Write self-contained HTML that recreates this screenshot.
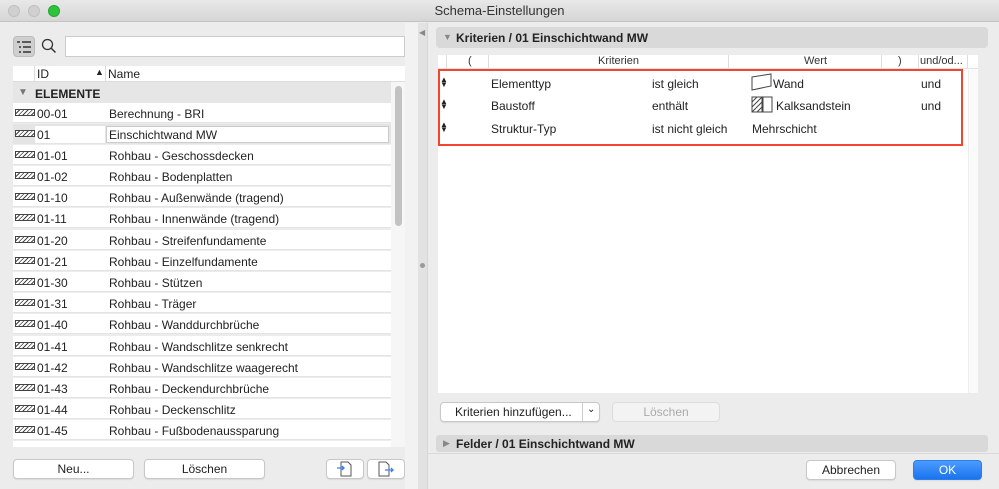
<!DOCTYPE html>
<html><head><meta charset="utf-8"><style>
*{box-sizing:border-box;margin:0;padding:0}
body{width:999px;height:489px;overflow:hidden;background:#ececec;font-family:"Liberation Sans",sans-serif;font-size:12px;color:#222;position:relative}
.abs{position:absolute}
.title{left:0;top:0;width:999px;height:22px;background:linear-gradient(#e8e8e8,#d6d6d6);border-bottom:1px solid #c4c4c4;text-align:center;line-height:22px;font-size:13px;color:#333}
.dot{width:12px;height:12px;border-radius:50%;top:5px;background:#d0d0d0;border:1px solid #c0c0c0}
.row{position:absolute;left:13px;width:378px;height:20px;background:#fff;border-bottom:1px solid #e4e4e4}
.row span{position:absolute;top:4px}
.hat{position:absolute;left:2px;top:6px;width:20px;height:7px;border:1px solid #444;background:repeating-linear-gradient(135deg,#fff 0 2px,#444 2px 3px)}
.btn{position:absolute;background:#fff;border:1px solid #c8c8c8;border-radius:4px;text-align:center;line-height:18px;height:20px;box-shadow:0 1px 1px rgba(0,0,0,.08)}
.crow span{position:absolute}
</style></head><body>
<div class="abs title">Schema-Einstellungen</div>
<div class="abs dot" style="left:8px"></div>
<div class="abs dot" style="left:28px"></div>
<div class="abs dot" style="left:48px;background:#2dc43b;border-color:#23a62f"></div>

<!-- left panel -->
<div class="abs" style="left:13px;top:36px;width:22px;height:21px;background:#cfcfcf;border-radius:4px;border:1px solid #bbb"></div>
<svg class="abs" style="left:16px;top:40px" width="16" height="14"><g stroke="#333" stroke-width="1.5"><line x1="1" y1="2" x2="4" y2="2"/><line x1="6" y1="2" x2="15" y2="2"/><line x1="3" y1="7" x2="5" y2="7"/><line x1="7" y1="7" x2="15" y2="7"/><line x1="3" y1="12" x2="5" y2="12"/><line x1="7" y1="12" x2="15" y2="12"/></g></svg>
<svg class="abs" style="left:41px;top:38px" width="16" height="16"><circle cx="6.5" cy="6.5" r="5" fill="none" stroke="#333" stroke-width="1.3"/><line x1="10" y1="10" x2="14.5" y2="14.5" stroke="#333" stroke-width="1.5"/></svg>
<div class="abs" style="left:65px;top:36px;width:340px;height:21px;background:#fff;border:1px solid #ccc"></div>
<div class="abs" style="left:13px;top:66px;width:392px;height:16px;background:#fff;border-bottom:1px solid #ddd"></div>
<div class="abs" style="left:34px;top:66px;height:16px;border-left:1px solid #ddd"></div>
<span class="abs" style="left:37px;top:67px">ID</span>
<span class="abs" style="left:95px;top:67px;font-size:9px">▲</span>
<div class="abs" style="left:105px;top:66px;height:16px;border-left:1px solid #ddd"></div>
<span class="abs" style="left:108px;top:67px">Name</span>
<div class="abs" style="left:13px;top:82px;width:378px;height:21px;background:#e6e6e6"></div>
<span class="abs" style="left:18px;top:87px;font-size:10px;color:#777">▼</span>
<b class="abs" style="left:35px;top:87px;font-size:12px">ELEMENTE</b>
<div class="abs" style="left:13px;top:82px;width:378px;height:365px;overflow:hidden">
<div style="position:relative;left:-13px;top:-82px">
<div class="row" style="top:103px"><i class="hat"></i><span style="left:24px">00-01</span><span style="left:96px">Berechnung - BRI</span></div>
<div class="row" style="top:124px;background:#e4e4e4"><i class="hat"></i><div style="position:absolute;left:22px;top:2px;width:70px;height:17px;background:#fff"></div><div style="position:absolute;left:93px;top:2px;width:283px;height:17px;background:#fff;border:1px solid #ccc"></div><span style="left:24px">01</span><span style="left:96px">Einschichtwand MW</span></div>
<div class="row" style="top:145px"><i class="hat"></i><span style="left:24px">01-01</span><span style="left:96px">Rohbau - Geschossdecken</span></div>
<div class="row" style="top:166px"><i class="hat"></i><span style="left:24px">01-02</span><span style="left:96px">Rohbau - Bodenplatten</span></div>
<div class="row" style="top:187px"><i class="hat"></i><span style="left:24px">01-10</span><span style="left:96px">Rohbau - Außenwände (tragend)</span></div>
<div class="row" style="top:208px"><i class="hat"></i><span style="left:24px">01-11</span><span style="left:96px">Rohbau - Innenwände (tragend)</span></div>
<div class="row" style="top:230px"><i class="hat"></i><span style="left:24px">01-20</span><span style="left:96px">Rohbau - Streifenfundamente</span></div>
<div class="row" style="top:251px"><i class="hat"></i><span style="left:24px">01-21</span><span style="left:96px">Rohbau - Einzelfundamente</span></div>
<div class="row" style="top:272px"><i class="hat"></i><span style="left:24px">01-30</span><span style="left:96px">Rohbau - Stützen</span></div>
<div class="row" style="top:293px"><i class="hat"></i><span style="left:24px">01-31</span><span style="left:96px">Rohbau - Träger</span></div>
<div class="row" style="top:314px"><i class="hat"></i><span style="left:24px">01-40</span><span style="left:96px">Rohbau - Wanddurchbrüche</span></div>
<div class="row" style="top:336px"><i class="hat"></i><span style="left:24px">01-41</span><span style="left:96px">Rohbau - Wandschlitze senkrecht</span></div>
<div class="row" style="top:357px"><i class="hat"></i><span style="left:24px">01-42</span><span style="left:96px">Rohbau - Wandschlitze waagerecht</span></div>
<div class="row" style="top:378px"><i class="hat"></i><span style="left:24px">01-43</span><span style="left:96px">Rohbau - Deckendurchbrüche</span></div>
<div class="row" style="top:399px"><i class="hat"></i><span style="left:24px">01-44</span><span style="left:96px">Rohbau - Deckenschlitz</span></div>
<div class="row" style="top:420px"><i class="hat"></i><span style="left:24px">01-45</span><span style="left:96px">Rohbau - Fußbodenaussparung</span></div>
<div class="row" style="top:441px"><i class="hat"></i><span style="left:24px">01-46</span><span style="left:96px">Rohbau - Bodenbeläge</span></div>
</div></div>
<div class="abs" style="left:391px;top:82px;width:14px;height:365px;background:#f6f6f6"></div>
<div class="abs" style="left:395px;top:86px;width:7px;height:140px;background:#c2c2c2;border-radius:4px"></div>
<div class="btn" style="left:13px;top:459px;width:121px">Neu...</div>
<div class="btn" style="left:144px;top:459px;width:121px">Löschen</div>
<div class="btn" style="left:326px;top:459px;width:38px"></div>
<div class="btn" style="left:367px;top:459px;width:38px"></div>
<svg class="abs" style="left:336px;top:461px" width="18" height="16"><path d="M5 1h7l3 3v11H5z" fill="#fff" stroke="#555"/><path d="M1 7h7M6 5l2 2-2 2" stroke="#3a7ef0" fill="none" stroke-width="1.3"/></svg>
<svg class="abs" style="left:377px;top:461px" width="18" height="16"><path d="M2 1h7l3 3v11H2z" fill="#fff" stroke="#555"/><path d="M8 9h8M14 7l2 2-2 2" stroke="#3a7ef0" fill="none" stroke-width="1.3"/></svg>

<!-- divider -->
<div class="abs" style="left:405px;top:23px;width:13px;height:466px;background:#f2f2f2"></div>
<div class="abs" style="left:418px;top:23px;width:10px;height:466px;background:#e2e2e2;border-right:1px solid #d6d6d6"></div>
<div class="abs" style="left:420px;top:263px;width:5px;height:5px;border-radius:50%;background:#999"></div>
<span class="abs" style="left:419px;top:28px;font-size:8px;color:#888">◀</span>

<!-- right -->
<div class="abs" style="left:436px;top:27px;width:552px;height:21px;background:#d9d9d9;border-radius:4px"></div>
<span class="abs" style="left:443px;top:32px;font-size:9px;color:#888">▼</span>
<b class="abs" style="left:456px;top:31px">Kriterien / 01 Einschichtwand MW</b>
<div class="abs" style="left:438px;top:55px;width:540px;height:338px;background:#fff"></div>
<div class="abs" style="left:438px;top:55px;width:540px;height:14px;border-bottom:1px solid #e2e2e2"></div>
<div class="abs crow" style="left:438px;top:55px;width:540px;height:14px;font-size:11px;color:#333">
<div style="position:absolute;left:8px;top:0;height:13px;border-left:1px solid #ddd"></div>
<span style="left:30px;top:0">(</span>
<div style="position:absolute;left:50px;top:0;height:13px;border-left:1px solid #ddd"></div>
<span style="left:160px;top:0">Kriterien</span>
<div style="position:absolute;left:290px;top:0;height:13px;border-left:1px solid #ddd"></div>
<span style="left:366px;top:0">Wert</span>
<div style="position:absolute;left:443px;top:0;height:13px;border-left:1px solid #ddd"></div>
<span style="left:460px;top:0">)</span>
<div style="position:absolute;left:480px;top:0;height:13px;border-left:1px solid #ddd"></div>
<span style="left:482px;top:0">und/od...</span>
<div style="position:absolute;left:529px;top:0;height:13px;border-left:1px solid #ddd"></div>
</div>
<div class="abs" style="left:438px;top:69px;width:525px;height:77px;border:2px solid #f0452e"></div>
<div class="abs crow" style="left:438px;top:69px;width:540px;height:80px">
<span style="left:2px;top:8px;font-size:8px;line-height:5px">▲<br>▼</span>
<span style="left:53px;top:8px">Elementtyp</span><span style="left:214px;top:8px">ist gleich</span>
<svg style="position:absolute;left:313px;top:4px" width="22" height="18"><path d="M1 4L20 1v12L1 17z" fill="#fff" stroke="#444"/></svg>
<span style="left:335px;top:8px">Wand</span><span style="left:483px;top:8px">und</span>
<span style="left:2px;top:30px;font-size:8px;line-height:5px">▲<br>▼</span>
<span style="left:53px;top:30px">Baustoff</span><span style="left:214px;top:30px">enthält</span>
<svg style="position:absolute;left:313px;top:27px" width="24" height="18"><rect x="1" y="1" width="10" height="15" fill="#fff" stroke="#444"/><path d="M1 6l5-5M1 11l10-10M1 16l10-10M6 16l5-5" stroke="#444"/><rect x="12" y="1" width="9" height="15" fill="#fff" stroke="#444"/></svg>
<span style="left:338px;top:30px">Kalksandstein</span><span style="left:483px;top:30px">und</span>
<span style="left:2px;top:53px;font-size:8px;line-height:5px">▲<br>▼</span>
<span style="left:53px;top:53px">Struktur-Typ</span><span style="left:214px;top:53px">ist nicht gleich</span>
<span style="left:314px;top:53px">Mehrschicht</span>
</div>
<div class="abs" style="left:968px;top:70px;width:10px;height:323px;background:#fafafa;border-left:1px solid #eee"></div>
<div class="btn" style="left:440px;top:402px;width:160px;text-align:left;padding-left:14px">Kriterien hinzufügen...</div>
<div class="abs" style="left:582px;top:403px;height:18px;border-left:1px solid #ccc"></div>
<span class="abs" style="left:587px;top:404px;font-size:10px">⌄</span>
<div class="btn" style="left:612px;top:402px;width:108px;color:#aaa;background:#f3f3f3;border-color:#ddd;box-shadow:none">Löschen</div>
<div class="abs" style="left:436px;top:435px;width:552px;height:17px;background:#d9d9d9;border-radius:3px"></div>
<span class="abs" style="left:443px;top:438px;font-size:9px;color:#888">▶</span>
<b class="abs" style="left:456px;top:437px">Felder / 01 Einschichtwand MW</b>
<div class="abs" style="left:428px;top:453px;width:571px;border-top:1px solid #d8d8d8"></div>
<div class="btn" style="left:806px;top:460px;width:90px">Abbrechen</div>
<div class="btn" style="left:913px;top:460px;width:69px;background:linear-gradient(#4c9bff,#1a74ee);color:#fff;border-color:#2d7ee8">OK</div>
</body></html>
